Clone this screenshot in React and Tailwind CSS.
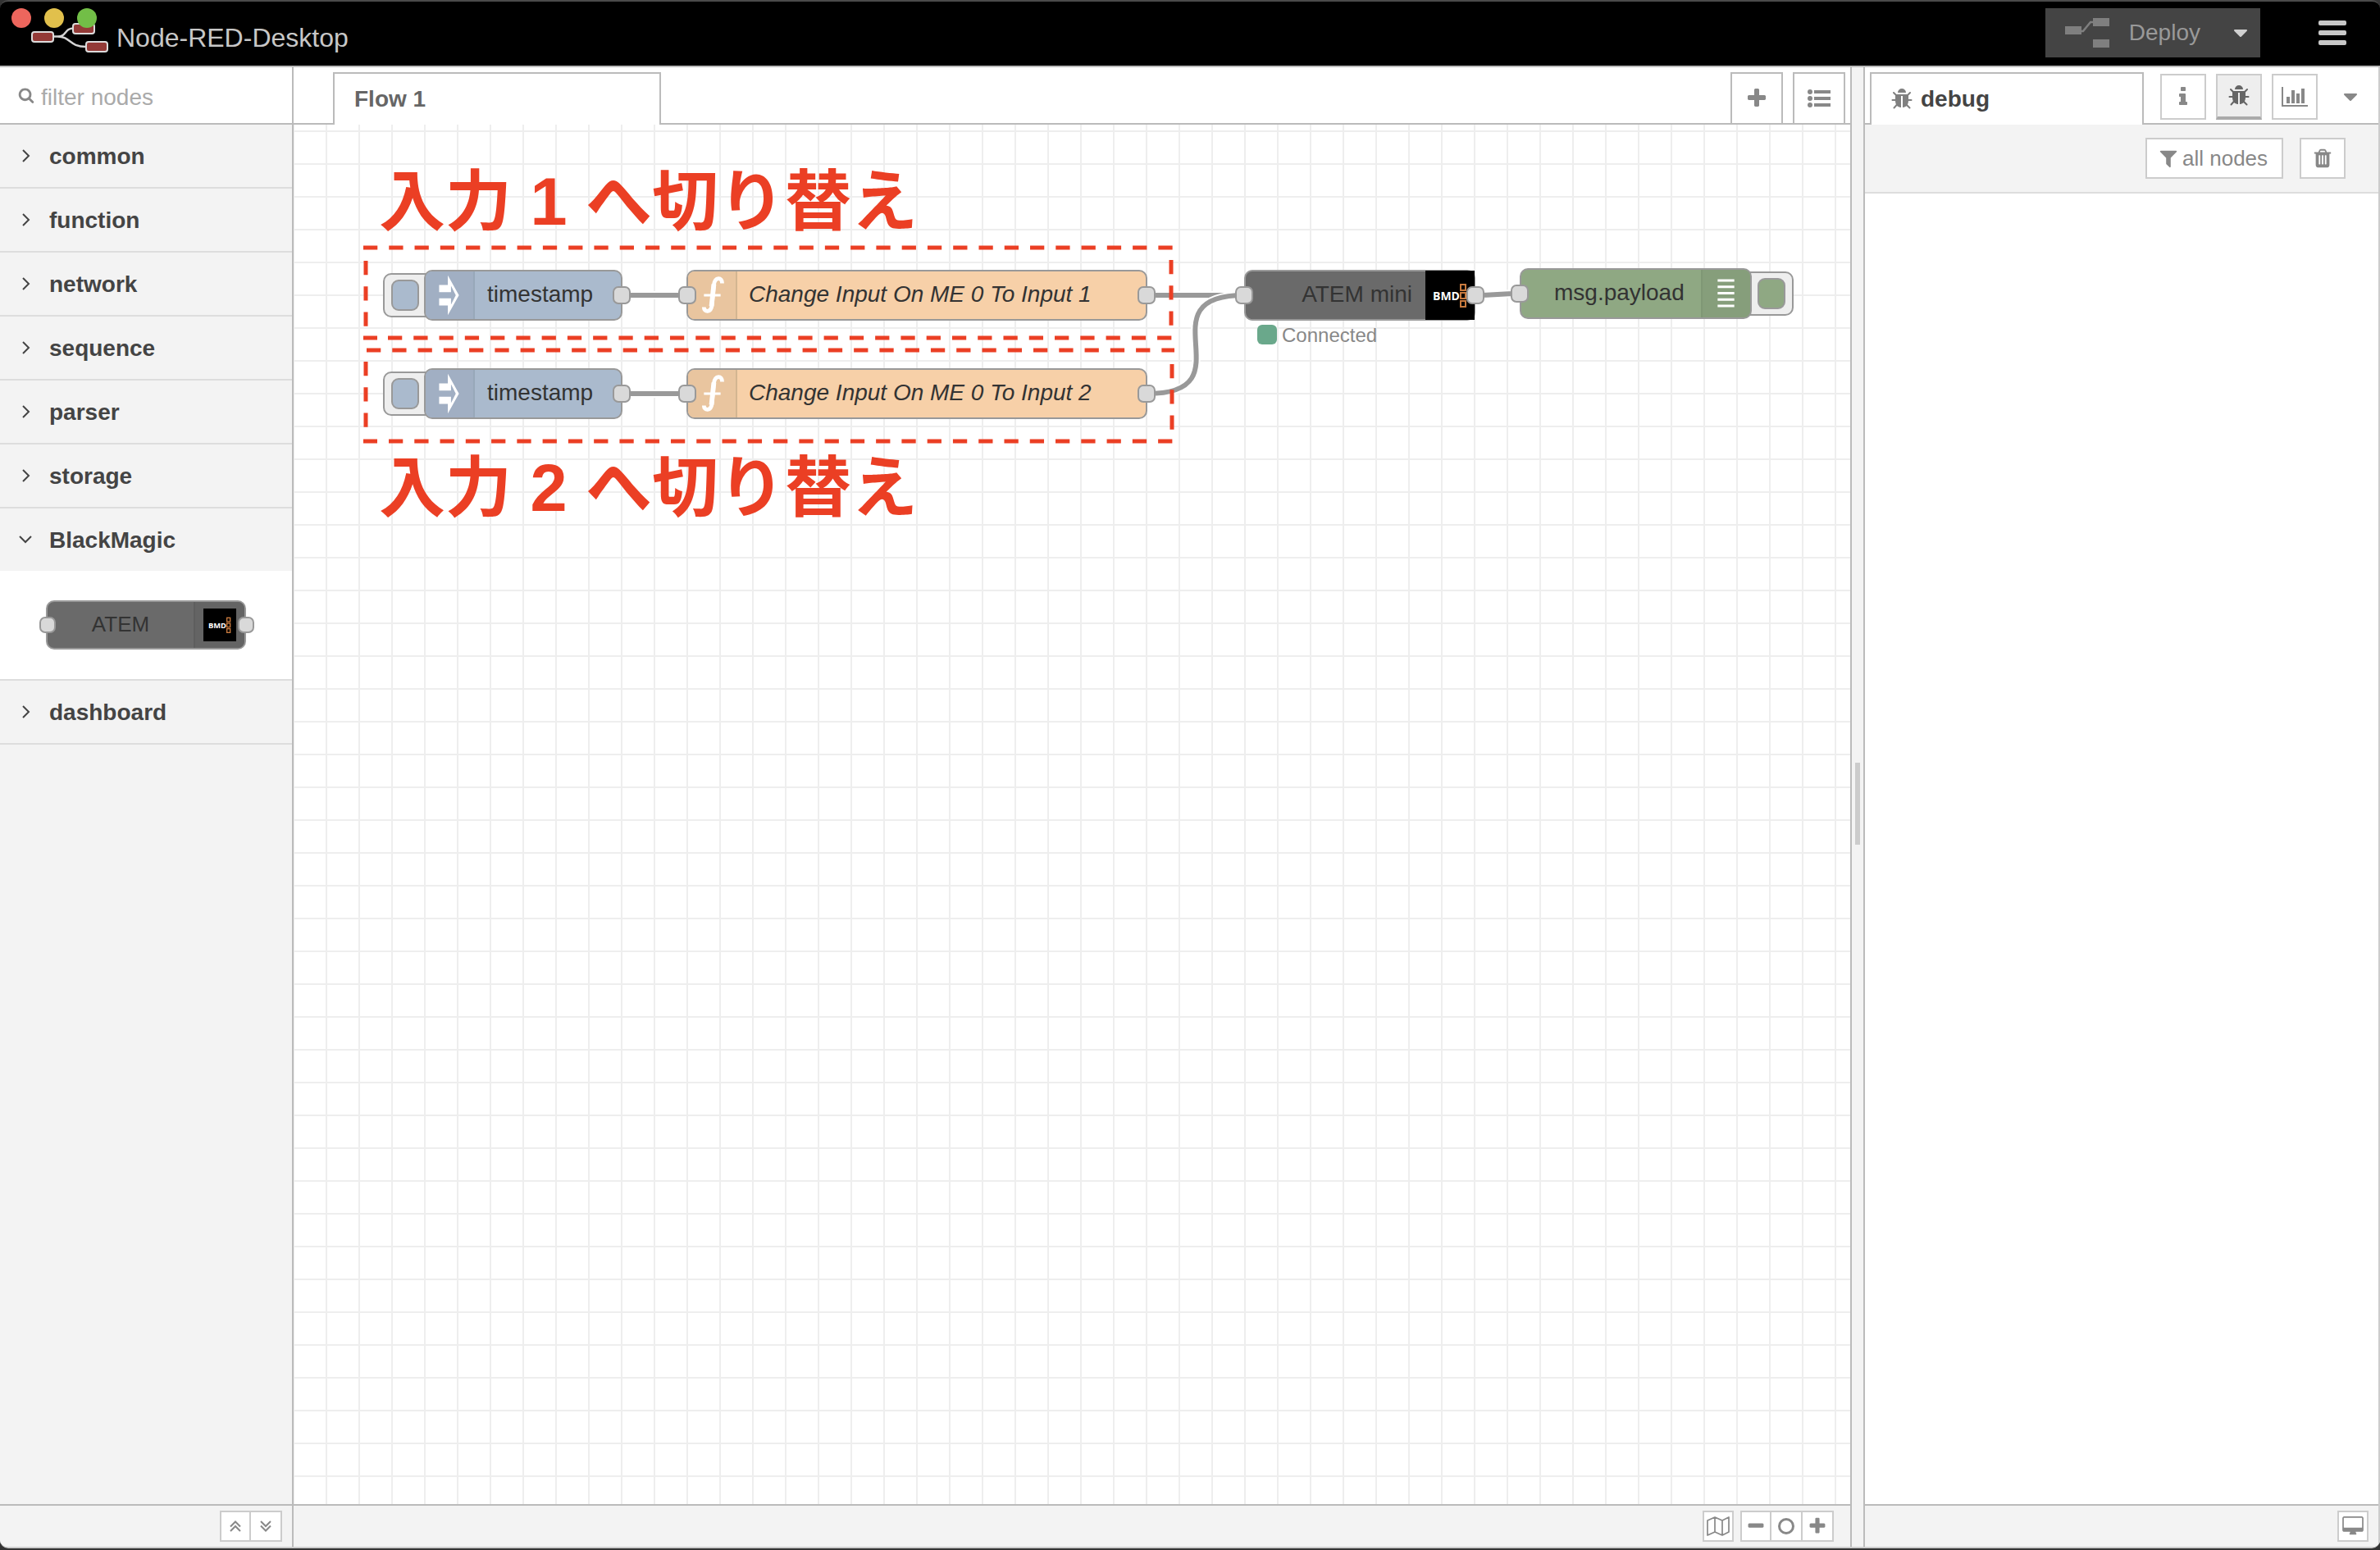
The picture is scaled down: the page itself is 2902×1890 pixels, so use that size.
import React from "react";

const FA = {
  plus: "M1600 736v192q0 40-28 68t-68 28h-416v416q0 40-28 68t-68 28h-192q-40 0-68-28t-28-68v-416h-416q-40 0-68-28t-28-68v-192q0-40 28-68t68-28h416v-416q0-40 28-68t68-28h192q40 0 68 28t28 68v416h416q40 0 68 28t28 68z",
  minus: "M1600 736v192q0 40-28 68t-68 28h-1216q-40 0-68-28t-28-68v-192q0-40 28-68t68-28h1216q40 0 68 28t28 68z",
  filter: "M1595 295q17 41-14 70l-493 493v742q0 42-39 59-13 5-25 5-27 0-45-19l-256-256q-19-19-19-45v-486l-493-493q-31-29-14-70 17-39 59-39h1280q42 0 59 39z",
  search: "M1216 832q0-185-131.5-316.5t-316.5-131.5-316.5 131.5-131.5 316.5 131.5 316.5 316.5 131.5 316.5-131.5 131.5-316.5zm512 832q0 52-38 90t-90 38q-54 0-90-38l-343-342q-179 124-399 124-143 0-273.5-55.5t-225-150-150-225-55.5-273.5 55.5-273.5 150-225 225-150 273.5-55.5 273.5 55.5 225 150 150 225 55.5 273.5q0 220-124 399l343 343q37 37 37 90z",
  desktop: "M1728 992v-832q0-13-9.5-22.5t-22.5-9.5h-1600q-13 0-22.5 9.5t-9.5 22.5v832q0 13 9.5 22.5t22.5 9.5h1600q13 0 22.5-9.5t9.5-22.5zm128-832v1088q0 66-47 113t-113 47h-544q0 37 16 77.5t32 71 16 43.5q0 26-19 45t-45 19h-512q-26 0-45-19t-19-45q0-14 16-44t32-70 16-78h-544q-66 0-113-47t-47-113v-1088q0-66 47-113t113-47h1600q66 0 113 47t47 113z",
  trash: "M704 1376v-704q0-14-9-23t-23-9h-64q-14 0-23 9t-9 23v704q0 14 9 23t23 9h64q14 0 23-9t9-23zm256 0v-704q0-14-9-23t-23-9h-64q-14 0-23 9t-9 23v704q0 14 9 23t23 9h64q14 0 23-9t9-23zm256 0v-704q0-14-9-23t-23-9h-64q-14 0-23 9t-9 23v704q0 14 9 23t23 9h64q14 0 23-9t9-23zm-544-992h448l-48-117q-7-9-17-11h-317q-10 2-17 11zm928 32v64q0 14-9 23t-23 9h-96v948q0 83-47 143.5t-113 60.5h-832q-66 0-113-58.5t-47-141.5v-952h-96q-14 0-23-9t-9-23v-64q0-14 9-23t23-9h309l70-167q15-37 54-63t79-26h320q40 0 79 26t54 63l70 167h309q14 0 23 9t9 23z",
  bug: "M1696 960q0 26-19 45t-45 19h-224q0 171-67 290l208 209q19 19 19 45t-19 45q-18 19-45 19t-45-19l-198-197q-5 5-15 13t-42 28.5-65 36.5-82 29-97 13v-896h-128v896q-51 0-101.5-13.5t-87-33-66-39-43.5-32.5l-15-14-183 207q-20 21-48 21-24 0-43-16-19-18-20.5-44.5t15.5-46.5l202-227q-58-114-58-274h-224q-26 0-45-19t-19-45 19-45 45-19h224v-294l-173-173q-19-19-19-45t19-45 45-19 45 19l173 173h844l173-173q19-19 45-19t45 19 19 45-19 45l-173 173v294h224q26 0 45 19t19 45zm-480-576h-640q0-133 93.5-226.5t226.5-93.5 226.5 93.5 93.5 226.5z",
  info: "M1216 1344v128q0 26-19 45t-45 19h-512q-26 0-45-19t-19-45v-128q0-26 19-45t45-19h64v-384h-64q-26 0-45-19t-19-45v-128q0-26 19-45t45-19h384q26 0 45 19t19 45v576h64q26 0 45 19t19 45zm-128-1152v192q0 26-19 45t-45 19h-256q-26 0-45-19t-19-45v-192q0-26 19-45t45-19h256q26 0 45 19t19 45z",
};

function Icon({ name, className }) {
  return (
    <svg viewBox="0 0 1792 1792" className={className} fill="currentColor" overflow="visible" aria-hidden="true">
      <path d={FA[name]} />
    </svg>
  );
}

function Caret({ className }) {
  return (
    <svg viewBox="0 0 16 9" className={className} fill="currentColor" aria-hidden="true">
      <path d="M1 0h14q2 0.500 0.500 2l-6.500 6.500q-1 1-2 0l-6.500-6.500q-1.500-1.500 0.500-2z" />
    </svg>
  );
}

function Logo() {
  return (
    <svg viewBox="0 0 94 36" className="h-9 w-[94px]" aria-hidden="true">
      <path d="M28 16.500h4c12 0 8-10 20-10M28 16.500h4c16 0 14 12.500 35 12.500" fill="none" stroke="#d5d5d5" strokeWidth="2.500" />
      <g fill="#933a37" stroke="#dcdcdc" strokeWidth="2">
        <rect x="1" y="11" width="26" height="12" rx="3" />
        <rect x="51" y="1" width="26" height="12" rx="3" />
        <rect x="67" y="23" width="26" height="12" rx="3" />
      </g>
    </svg>
  );
}

function Header() {
  return (
    <header className="relative flex h-20 shrink-0 items-center justify-between rounded-t-[10px] border-t-2 border-[#4a4a4a] bg-black">
      <div className="flex items-center pl-[38px] pt-[10px]">
        <Logo />
        <h1 className="pl-[10px] text-[32px] leading-10 text-[#c7c7c7]">Node-RED-Desktop</h1>
      </div>
      <div className="absolute left-[14px] top-2 flex gap-4">
        <button aria-label="Close" className="size-6 rounded-full bg-[#ed665d]" />
        <button aria-label="Minimize" className="size-6 rounded-full bg-[#e1c04c]" />
        <button aria-label="Zoom" className="size-6 rounded-full bg-[#72be47]" />
      </div>
      <div className="flex items-center pb-[2px] pr-[41px]">
        <div className="flex h-[60px] items-center bg-[#444]">
          <button className="flex h-full items-center gap-6 pl-6 text-[28px] text-[#999]">
            <svg viewBox="0 0 54 36" className="h-9 w-[54px]" aria-hidden="true">
              <path d="M18 16h4l9-11h6" fill="none" stroke="#7f7f7f" strokeWidth="2.500" />
              <path d="M0 10h20v10H0zM34 0h20v10H34zM34 26h20v10H34z" fill="#7f7f7f" />
            </svg>
            Deploy
          </button>
          <button aria-label="Deploy options" className="flex h-full items-center pl-[41px] pr-4 text-[#d0d0d0]">
            <Caret className="h-[9px] w-4" />
          </button>
        </div>
        <button aria-label="Menu" className="ml-[71px] flex flex-col gap-[6px]">
          <span className="h-[6px] w-[34px] rounded-[2px] bg-[#c7c7c7]" />
          <span className="h-[6px] w-[34px] rounded-[2px] bg-[#c7c7c7]" />
          <span className="h-[6px] w-[34px] rounded-[2px] bg-[#c7c7c7]" />
        </button>
      </div>
    </header>
  );
}

function Category({ label, open = false, children }) {
  return (
    <section className="border-b-2 border-[#ddd]">
      <button aria-expanded={open} className="flex h-[76px] w-full items-center gap-5 bg-[#f3f3f3] pl-[22px] text-left text-[28px] font-bold text-[#444]">
        <svg viewBox="0 0 18 18" className="size-[18px]" fill="none" stroke="currentColor" strokeWidth="2" aria-hidden="true">
          <path d={open ? "M2 5l7 7 7-7" : "M6 2l7 7-7 7"} />
        </svg>
        <span className="pt-[2px]">{label}</span>
      </button>
      {children}
    </section>
  );
}

function BmdIcon({ className }) {
  return (
    <svg viewBox="0 0 60 60" className={className} aria-hidden="true">
      <rect width="60" height="60" fill="#000" />
      <text x="9" y="36" fill="#fff" fontSize="14" fontWeight="700" fontFamily='"Open Sans", "Liberation Sans", sans-serif'>BMD</text>
      <g fill="none" stroke="#c87a3e" strokeWidth="2">
        <rect x="43" y="17" width="6" height="7" />
        <rect x="43" y="27" width="6" height="7" />
        <rect x="43" y="37" width="6" height="7" />
      </g>
    </svg>
  );
}

const groupButton = "flex size-[38px] items-center justify-center border-2 border-[#ccc] bg-white text-[#888]";
const groupButtonNext = "flex size-[38px] items-center justify-center border-2 border-l-0 border-[#ccc] bg-white text-[#888]";

function Palette() {
  return (
    <aside className="flex w-[358px] shrink-0 flex-col border-r-2 border-[#bbb] bg-[#f3f3f3]">
      <label className="flex h-[70px] shrink-0 items-center gap-2 border-b-2 border-[#bbb] bg-white pl-[22px]">
        <Icon name="search" className="size-5 shrink-0 text-[#888]" />
        <input aria-label="filter nodes" placeholder="filter nodes" className="w-full min-w-0 pt-[6px] text-[28px] outline-none placeholder:text-[#aaa]" />
      </label>
      <div className="flex-1">
        {["common", "function", "network", "sequence", "parser", "storage"].map((c) => (
          <Category key={c} label={c} />
        ))}
        <Category label="BlackMagic" open>
          <div className="bg-white py-9 pl-14">
            <div className="relative flex h-[60px] w-[244px] overflow-visible rounded-[10px] border-2 border-[#999] bg-[#6a6a6a]">
              <span className="flex-1 pb-1 text-center text-[26px] leading-[54px] text-[#333]">ATEM</span>
              <span className="flex w-[62px] items-center rounded-r-[8px] border-l-2 border-[#5e5e5e] bg-[#646464] pl-[10px]">
                <BmdIcon className="size-10" />
              </span>
              <Port className="left-[-10px] top-[18px] size-5" />
              <Port className="right-[-12px] top-[18px] size-5" />
            </div>
          </div>
        </Category>
        <Category label="dashboard" />
      </div>
      <footer className="flex h-[52px] shrink-0 items-center justify-end border-t-2 border-[#bbb] pr-3">
        <button aria-label="Collapse all" className={groupButton}>
          <svg viewBox="0 0 14 14" className="size-[14px]" fill="none" stroke="currentColor" strokeWidth="2" aria-hidden="true">
            <path d="M1 7.500l6-6 6 6M1 13l6-6 6 6" />
          </svg>
        </button>
        <button aria-label="Expand all" className={groupButtonNext}>
          <svg viewBox="0 0 14 14" className="size-[14px]" fill="none" stroke="currentColor" strokeWidth="2" aria-hidden="true">
            <path d="M1 1l6 6 6-6M1 6.500l6 6 6-6" />
          </svg>
        </button>
      </footer>
    </aside>
  );
}

function Port({ className }) {
  return <span className={"absolute rounded-[7px] border-2 border-[#999] bg-[#d9d9d9] " + className} />;
}

function InjectNode({ className }) {
  return (
    <div className={"absolute h-[62px] w-[292px] " + className}>
      <button aria-label="Inject" className="absolute left-0 top-1 flex h-[54px] w-[70px] items-center rounded-[10px] border-2 border-[#999] bg-[#eee] pl-2">
        <span className="h-[38px] w-[34px] rounded-[9px] border-2 border-[#999] bg-[#aabacd]" />
      </button>
      <div className="absolute left-[50px] top-0 flex h-[62px] w-[242px] rounded-[10px] border-2 border-[#999] bg-[#aabacd]">
        <svg viewBox="0 0 60 60" className="h-full w-[60px] rounded-l-[8px] border-r-2 border-[#98a8b9] bg-[#a1afc3]" aria-hidden="true">
          <path fill="#fff" d="M17 17h11V5l14 25-14 25V43H17v-9h15v8l6-12-6-12v8H17z" />
        </svg>
        <span className="pl-[15px] text-[28px] leading-[56px] text-[#333]">timestamp</span>
      </div>
      <Port className="left-[280px] top-5 size-[22px]" />
    </div>
  );
}

function FunctionNode({ className, label }) {
  return (
    <div className={"absolute flex h-[62px] w-[562px] rounded-[10px] border-2 border-[#999] bg-[#f7d0a8] " + className}>
      <svg viewBox="0 0 60 60" className="h-full w-[60px] rounded-l-[8px] border-r-2 border-[#d3b591] bg-[#e9c59f]" fill="none" stroke="#fff" aria-hidden="true">
        <path d="M43 15c0-8-9-9-10.500 2l-2.500 26c-1 9-10 9-10 2" strokeWidth="5" />
        <path d="M32.500 16l-3 28" strokeWidth="6" />
        <path d="M20 30h21" strokeWidth="3" />
      </svg>
      <span className="pl-[14px] text-[28px] italic leading-[56px] text-[#333]">{label}</span>
      <Port className="left-[-12px] top-[18px] size-[22px]" />
      <Port className="right-[-12px] top-[18px] size-[22px]" />
    </div>
  );
}

function AtemNode() {
  return (
    <div className="absolute left-[1159px] top-[177px] h-[62px] w-[282px]">
      <div className="flex h-full rounded-[10px] border-2 border-[#999] bg-[#6a6a6a]">
        <span className="flex-1 pr-[75px] text-right text-[28px] leading-[56px] text-[#333]">ATEM mini</span>
      </div>
      <BmdIcon className="absolute right-[1px] top-[1px] size-[60px]" />
      <Port className="left-[-11px] top-5 size-[22px]" />
      <Port className="right-[-11px] top-5 size-[22px]" />
      <div className="absolute left-4 top-[66px] flex items-center gap-[6px]">
        <span className="size-6 rounded-[6px] bg-[#6aa88b]" />
        <span className="pt-[2px] text-[24px] leading-6 text-[#888]">Connected</span>
      </div>
    </div>
  );
}

function DebugNode() {
  return (
    <div className="absolute left-[1495px] top-[175px] h-[62px] w-[334px]">
      <button aria-label="Toggle debug output" className="absolute right-0 top-1 flex h-[54px] w-[70px] items-center justify-end rounded-[10px] border-2 border-[#999] bg-[#eee] pr-2">
        <span className="h-[38px] w-[34px] rounded-[9px] border-2 border-[#999] bg-[#8fa883]" />
      </button>
      <div className="absolute left-0 top-0 flex h-[62px] w-[283px] rounded-[10px] border-2 border-[#999] bg-[#8fa883]">
        <span className="flex-1 pl-10 text-[28px] leading-[56px] text-[#333]">msg.payload</span>
        <svg viewBox="0 0 60 60" className="h-full w-[60px] rounded-r-[8px] border-l-2 border-[#7f9775] bg-[#869e7b]" aria-hidden="true">
          <path fill="#fff" d="M19 12h21v3H19zM19 20h21v3H19zM19 28h21v3H19zM19 36h21v3H19zM19 44h21v3H19z" />
        </svg>
      </div>
      <Port className="left-[-11px] top-5 size-[22px]" />
    </div>
  );
}

const WIRES = [
  "M400 208H480",
  "M400 328H480",
  "M1041 208H1159",
  "M1041 328C1167 328 1033 208 1159 208",
  "M1441 208C1468 208 1468 206 1495 206",
];

const DASHES = [
  "M85 150H1072",
  "M1070 165V246",
  "M115 260H1072",
  "M88 166V247",
  "M89 275H1074",
  "M1071 292V373",
  "M116 386H1072",
  "M88 289V369",
];

function Canvas() {
  return (
    <div className="relative min-h-0 flex-1 overflow-hidden bg-white bg-[linear-gradient(#eee_2px,transparent_2px),linear-gradient(90deg,#eee_2px,transparent_2px)] bg-[position:-1px_7px] bg-[size:40px_40px]">
      <svg className="absolute inset-0 size-full" fill="none" aria-hidden="true">
        {WIRES.map((d) => (
          <g key={d}>
            <path d={d} stroke="#fff" strokeWidth="10" />
            <path d={d} stroke="#999" strokeWidth="6" />
          </g>
        ))}
      </svg>
      <InjectNode className="left-[109px] top-[177px]" />
      <InjectNode className="left-[109px] top-[297px]" />
      <FunctionNode className="left-[479px] top-[177px]" label="Change Input On ME 0 To Input 1" />
      <FunctionNode className="left-[479px] top-[297px]" label="Change Input On ME 0 To Input 2" />
      <AtemNode />
      <DebugNode />
      <svg className="pointer-events-none absolute inset-0 size-full" fill="none" stroke="#eb3f24" strokeWidth="5" aria-hidden="true">
        {DASHES.map((d) => (
          <path key={d} d={d} strokeDasharray="17.270 14" />
        ))}
        <path d="M85 260h17M85 386h17" />
      </svg>
      <p className="absolute left-[104px] top-[54px] whitespace-nowrap font-['Liberation_Sans','Noto_Sans_CJK_JP',sans-serif] text-[81px] font-bold leading-[80px] text-[#eb3f24]">入力 1 へ切り替え</p>
      <p className="absolute left-[104px] top-[403px] whitespace-nowrap font-['Liberation_Sans','Noto_Sans_CJK_JP',sans-serif] text-[81px] font-bold leading-[80px] text-[#eb3f24]">入力 2 へ切り替え</p>
    </div>
  );
}

function Workspace() {
  const tabButton = "flex h-16 w-16 items-center justify-center border-2 border-[#bbb] bg-white text-[#888]";
  return (
    <main className="flex min-w-0 flex-1 flex-col border-r-2 border-[#bbb] bg-white">
      <div className="flex h-[70px] shrink-0 items-end">
        <div className="h-full w-12 border-b-2 border-[#bbb]" />
        <button className="h-16 w-[400px] border-2 border-b-0 border-[#bbb] bg-white pl-6 text-left text-[28px] font-bold text-[#666]">Flow 1</button>
        <div className="h-full flex-1 border-b-2 border-[#bbb]" />
        <button aria-label="Add flow" className={tabButton}>
          <Icon name="plus" className="size-7" />
        </button>
        <div className="h-full w-3 border-b-2 border-[#bbb]" />
        <button aria-label="List flows" className={tabButton}>
          <svg viewBox="0 0 28 22" className="h-[22px] w-7" fill="currentColor" aria-hidden="true">
            <circle cx="3" cy="3" r="3" />
            <circle cx="3" cy="11" r="3" />
            <circle cx="3" cy="19" r="3" />
            <path d="M8 1h20v4H8zM8 9h20v4H8zM8 17h20v4H8z" />
          </svg>
        </button>
        <div className="h-full w-[6px] border-b-2 border-[#bbb]" />
      </div>
      <Canvas />
      <footer className="flex h-[52px] shrink-0 items-center justify-end border-t-2 border-[#bbb] bg-[#f3f3f3] pr-5">
        <button aria-label="Toggle navigator" className={groupButton + " mr-2"}>
          <svg viewBox="0 0 28 24" className="h-6 w-7" fill="none" stroke="currentColor" strokeWidth="1.700" strokeLinejoin="round" aria-hidden="true">
            <path d="M1 5l9-4 9 4 8-4v18l-8 4-9-4-9 4zM10 1v18M19 5v18" />
          </svg>
        </button>
        <button aria-label="Zoom out" className={groupButton}>
          <Icon name="minus" className="size-6" />
        </button>
        <button aria-label="Reset zoom" className={groupButtonNext}>
          <span className="size-5 rounded-full border-3 border-[#888]" />
        </button>
        <button aria-label="Zoom in" className={groupButtonNext}>
          <Icon name="plus" className="size-6" />
        </button>
      </footer>
    </main>
  );
}

function Sidebar() {
  const tool = "mb-1 flex size-14 items-center justify-center border-2 border-[#ccc] bg-white text-[#888]";
  return (
    <aside className="flex w-[630px] shrink-0 flex-col border-x-2 border-l-[#bbb] border-r-[#ccc] bg-white">
      <div className="flex h-[70px] shrink-0 items-end">
        <div className="h-full w-[6px] border-b-2 border-[#bbb]" />
        <button className="flex h-16 w-[334px] items-center gap-[9px] border-2 border-b-0 border-[#bbb] bg-white pl-[23px] text-[28px] font-bold text-[#444]">
          <Icon name="bug" className="size-7 text-[#808080]" />
          debug
        </button>
        <div className="flex h-full flex-1 items-end gap-3 border-b-2 border-[#bbb] pl-5">
          <button aria-label="Information" className={tool}>
            <Icon name="info" className="size-7" />
          </button>
          <button aria-label="Debug messages" className="mb-1 flex size-14 items-center justify-center border-2 border-b-4 border-[#ccc] border-b-[#aaa] bg-[#eee] text-[#666]">
            <Icon name="bug" className="size-7" />
          </button>
          <button aria-label="Dashboard" className={tool}>
            <svg viewBox="0 0 32 24" className="h-6 w-8" fill="currentColor" aria-hidden="true">
              <path d="M0 0h2v22h30v2H0zM6 12h4v8H6zM12 4h4v16h-4zM18 8h4v12h-4zM24 2h4v18h-4z" />
            </svg>
          </button>
          <button aria-label="More tabs" className="flex h-16 items-center pl-5 text-[#888]">
            <Caret className="h-[9px] w-4" />
          </button>
        </div>
      </div>
      <div className="flex h-[84px] shrink-0 items-center justify-end gap-5 border-b-2 border-[#ddd] bg-[#f3f3f3] pr-10">
        <button className="flex h-[50px] w-[168px] items-center gap-1 border-2 border-[#ccc] bg-white pl-[13px] text-[26px] text-[#888]">
          <Icon name="filter" className="size-[26px]" />
          all nodes
        </button>
        <button aria-label="Clear messages" className="flex h-[50px] w-14 items-center justify-center border-2 border-[#ccc] bg-white text-[#888]">
          <Icon name="trash" className="size-[26px]" />
        </button>
      </div>
      <div className="flex-1" />
      <footer className="flex h-[52px] shrink-0 items-center justify-end border-t-2 border-[#bbb] bg-[#f3f3f3] pr-3">
        <button aria-label="Open in new window" className={groupButton}>
          <Icon name="desktop" className="size-6" />
        </button>
      </footer>
    </aside>
  );
}

export default function App() {
  return (
    <div className="flex h-screen flex-col bg-[#333] pb-[2px] font-['Liberation_Sans',sans-serif]">
      <Header />
      <div className="flex min-h-0 flex-1 overflow-hidden rounded-b-[10px] border-y-2 border-t-[#bbb] border-b-[#ccc] bg-[#f3f3f3]">
        <Palette />
        <Workspace />
        <div role="separator" aria-orientation="vertical" className="flex w-[14px] shrink-0 items-center justify-center bg-[#f3f3f3] pb-2">
          <span className="h-[100px] w-[6px] bg-[#ccc]" />
        </div>
        <Sidebar />
      </div>
    </div>
  );
}
